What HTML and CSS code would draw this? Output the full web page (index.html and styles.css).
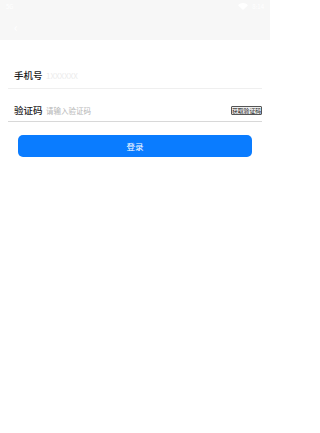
FILE: index.html
```html
<!DOCTYPE html>
<html lang="zh">
<head>
<meta charset="utf-8">
<title>登录</title>
<link rel="stylesheet" href="styles.css">
</head>
<body>
<div class="page">
<header class="topbar">
  <div class="status">
    <span class="st-left">5G</span>
    <span class="st-right">
      <svg class="wifi" width="10" height="7" viewBox="0 0 10 7"><path d="M0 2.2C2.8-0.6 7.2-0.6 10 2.2L5 7Z" fill="#fff"/></svg>
      <span class="st-time">8:14</span>
    </span>
  </div>
  <div class="navbar"><span class="back">‹</span></div>
</header>
<main class="form">
  <div class="row row-phone">
    <label class="label">手机号</label>
    <span class="value">1XXXXXX</span>
  </div>
  <div class="row row-code">
    <label class="label">验证码</label>
    <span class="placeholder">请输入验证码</span>
    <button class="code-btn">获取验证码</button>
  </div>
  <button class="login">登录</button>
</main>
</div>
</body>
</html>
```
FILE: styles.css
```css
html, body {
  margin: 0;
  padding: 0;
  background: #ffffff;
  font-family: "Noto Sans CJK SC", "Noto Sans", sans-serif;
}
.page {
  width: 270px;
}
.topbar {
  height: 40px;
  background: #f7f7f7;
  display: flex;
  flex-direction: column;
}
.status {
  height: 12px;
  display: flex;
  justify-content: space-between;
  align-items: center;
  padding: 0 6px;
  color: #ffffff;
  font-size: 6px;
}
.st-right {
  display: flex;
  align-items: center;
  gap: 4px;
}
.navbar {
  flex: 1;
  display: flex;
  align-items: center;
  padding-left: 14px;
}
.back {
  color: #ffffff;
  font-size: 12px;
}
.form {
  padding: 22px 8px 0;
  display: flex;
  flex-direction: column;
}
.row {
  display: flex;
  align-items: center;
  padding-left: 6px;
}
.row-phone {
  height: 26px;
  border-bottom: 1px solid #efefef;
}
.row-code {
  height: 22px;
  margin-top: 10px;
  border-bottom: 1.5px solid #d8d8d8;
}
.label {
  width: 32px;
  font-size: 9.5px;
  font-weight: 500;
  color: #1a1a1a;
}
.value {
  font-size: 8px;
  color: #ececec;
  flex: 1;
}
.placeholder {
  font-size: 7.5px;
  color: #b5b5b5;
  flex: 1;
}
.code-btn {
  width: 31px;
  height: 9px;
  padding: 0;
  margin: 0;
  font-family: "Noto Sans CJK SC", sans-serif;
  font-size: 5.8px;
  line-height: 7px;
  color: #222222;
  background: #efefef;
  border: 0.8px solid #555555;
  border-radius: 1px;
  white-space: nowrap;
  overflow: hidden;
}
.login {
  margin: 13px 10px 0;
  height: 22px;
  border: none;
  border-radius: 5px;
  background: #0a7cff;
  color: #ffffff;
  font-family: "Noto Sans CJK SC", sans-serif;
  font-size: 8.5px;
  padding: 0;
}
```
